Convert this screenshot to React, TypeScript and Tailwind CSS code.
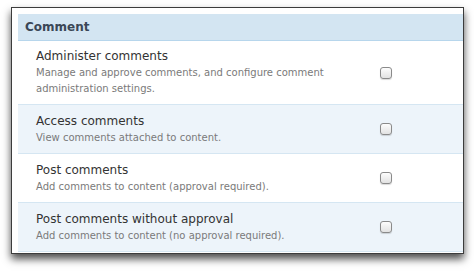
import React from "react";

const perms = [
  {
    title: "Administer comments",
    desc: "Manage and approve comments, and configure comment administration settings.",
  },
  { title: "Access comments", desc: "View comments attached to content." },
  { title: "Post comments", desc: "Add comments to content (approval required)." },
  {
    title: "Post comments without approval",
    desc: "Add comments to content (no approval required).",
  },
];

const Checkbox: React.FC = () => (
  <span className="block w-[12px] h-[12px] rounded-[3px] border border-[#8a8a8a] bg-gradient-to-b from-[#fdfdfd] to-[#e2e2e2] shadow-[0_1px_1px_rgba(0,0,0,0.15)]" />
);

const App: React.FC = () => {
  return (
    <div
      className="w-[474px] h-[272px] bg-white pt-[7px] pl-[11px]"
      style={{ fontFamily: '"DejaVu Sans", Verdana, sans-serif' }}
    >
      <div className="w-[453px] h-[247px] border border-[#3c3c3c] bg-white overflow-hidden pl-[6px] pt-[6px] shadow-[0_5px_8px_rgba(0,0,0,0.7)]">
        <div className="bg-[#d3e5f2] border-b border-[#b7d6ec] h-[27px] flex items-center pl-[7px]">
          <span className="text-[12px] font-bold text-[#3a4756]">Comment</span>
        </div>
        {perms.map((p, i) => (
          <div
            key={p.title}
            className={`flex items-center border-b border-[#d5e6f2] ${
              i % 2 === 1 ? "bg-[#edf4fa]" : "bg-white"
            } ${i === 0 ? "h-[64px]" : "h-[49px]"}`}
          >
            <div className="w-[344px] pl-[18px] pr-[20px]">
              <div className="text-[12px] leading-[17px] text-[#333]">{p.title}</div>
              <div className="text-[10px] leading-[16px] text-[#7a7a7a]">{p.desc}</div>
            </div>
            <div className="pl-[18px]">
              <Checkbox />
            </div>
          </div>
        ))}
      </div>
    </div>
  );
};

export default App;
